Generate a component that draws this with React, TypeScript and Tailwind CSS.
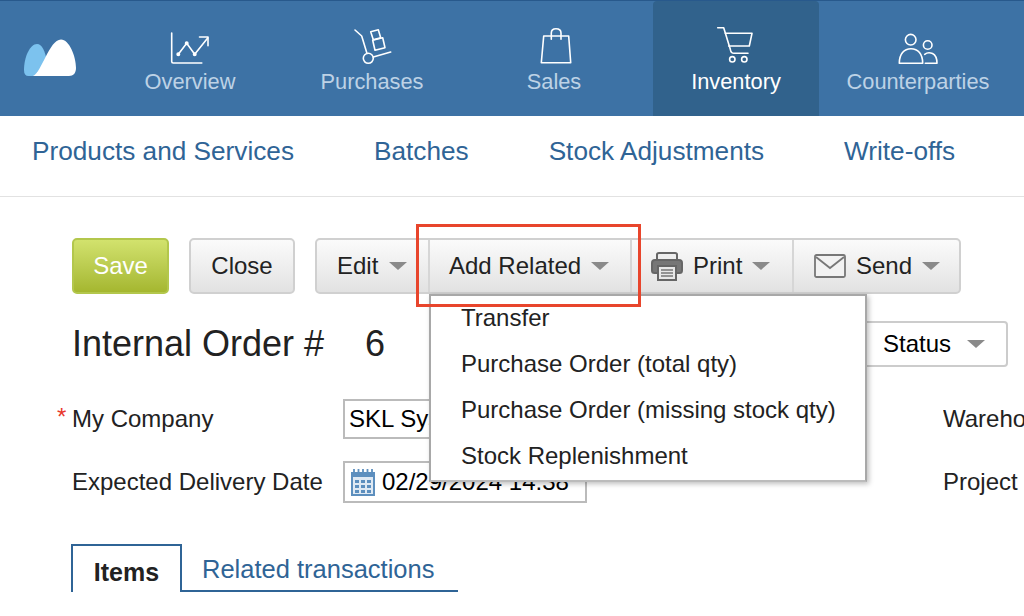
import * as React from "react";

const NavIcon = ({children}: {children: React.ReactNode}) => (
    <svg viewBox="0 0 44 40" className="w-[44px] h-[40px] overflow-visible" fill="none" stroke="white" strokeWidth="1.6" strokeLinecap="round" strokeLinejoin="round">
        {children}
    </svg>
);

const navItems: {label: string; active?: boolean; icon: React.ReactNode}[] = [
    {
        label: 'Overview',
        icon: (
            <>
                <path d="M3.7 4V32.5Q3.7 34 5.2 34H33.8" />
                <path d="M10.3 25.3L18.7 14.3L26.7 25.3L39.7 9" />
                <path d="M31.5 8H40V16.7" />
                <circle cx="10.3" cy="25.3" r="1.2" fill="white" />
                <circle cx="18.7" cy="14.3" r="1.2" fill="white" />
                <circle cx="26.7" cy="25.3" r="1.2" fill="white" />
            </>
        ),
    },
    {
        label: 'Purchases',
        icon: (
            <>
                <path d="M5 1L11.7 7L17 24.5" />
                <circle cx="18.3" cy="29.3" r="5" />
                <path d="M23.3 28L40.7 23" />
                <path d="M22.7 11.3L32.7 8.7L35 18.7L25 21.3Z" />
                <path d="M20.7 2.7L28.3 .7L30.7 8.7L23.3 10.7Z" />
            </>
        ),
    },
    {
        label: 'Sales',
        icon: (
            <>
                <path d="M11.7 7H36.7L38.7 33.7H9.3Z" />
                <path d="M19.3 10.3V4Q19.3 -.3 24 -.3Q29 -.3 29 4V10.3" />
            </>
        ),
    },
    {
        label: 'Inventory',
        active: true,
        icon: (
            <>
                <path d="M3.7 -1.3H9.7L16.3 20.3Q17 24.3 20 24.3H34" />
                <path d="M11.3 4.3H38L35.3 17H14.7" />
                <circle cx="18.3" cy="30.3" r="2.7" />
                <circle cx="30.3" cy="30.3" r="2.7" />
            </>
        ),
    },
    {
        label: 'Counterparties',
        icon: (
            <>
                <circle cx="14.7" cy="10.7" r="5.3" />
                <path d="M3.3 34.3C3.3 25 8 19.7 15 19.7C22 19.7 26.7 25 26.7 34.3Z" />
                <circle cx="31.7" cy="16" r="4.3" />
                <path d="M28.7 25.3C31 23.5 34 23.5 36.5 24.5C39.5 26 41 30 41 34.3H29.3" />
            </>
        ),
    },
];

const subNavItems = ['Products and Services', 'Batches', 'Stock Adjustments', 'Write-offs'];

const menuItems = ['Transfer', 'Purchase Order (total qty)', 'Purchase Order (missing stock qty)', 'Stock Replenishment'];

const Arrow = () => (
    <span className="inline-block w-0 h-0 border-x-[9px] border-t-[8px] border-x-transparent border-t-[#8a8a8a]" />
);

const btnGradient = 'bg-gradient-to-b from-[#fbfbfb] to-[#e2e2e2]';

function App() {
    return (
        <div className="w-[1024px] h-[616px] overflow-hidden bg-white text-[24px] text-[#222] font-['Liberation_Sans',Arial,sans-serif]">
            {/* top nav */}
            <div className="h-[116px] bg-[#3d72a5] border-t border-[#28598c] flex pl-[24px]">
                <svg viewBox="0 0 52 38" className="w-[52px] h-[38px] mt-[38px] mr-[31px] shrink-0">
                    <path d="M4.5 37C1.5 37 0 35 0 31C0 18 6 5 13 5C18 5 21 12 23 22L10 37Z" fill="#7cc2ee" />
                    <path d="M9 37C18 33 25 1 37 .5C45 .5 52 17 52 29C52 34 49.500 37 45 37Z" fill="white" />
                </svg>
                <div className="flex gap-[16px]">
                    {navItems.map((item) => (
                        <div key={item.label} className={`w-[166px] h-[115px] pt-[28px] flex flex-col items-center rounded-t ${item.active ? 'bg-[#31628c] text-white' : 'text-[#bdd2e6]'}`}>
                            <NavIcon>{item.icon}</NavIcon>
                            <span className="text-[21.8px] leading-[26px]">{item.label}</span>
                        </div>
                    ))}
                </div>
            </div>

            {/* sub nav */}
            <div className="h-[81px] border-b border-[#e2e2e2] flex items-center gap-[80px] pl-[32px] pb-[8px] text-[26.2px] text-[#2f6496]">
                {subNavItems.map((item) => (
                    <span key={item}>{item}</span>
                ))}
            </div>

            {/* toolbar */}
            <div className="mt-[41px] pl-[72px] flex h-[56px]">
                <button className="w-[97px] rounded-[5px] border-2 border-[#b3c74c] bg-gradient-to-b from-[#d2e26d] to-[#a5b72f] text-white">Save</button>
                <button className={`ml-[20px] w-[106px] rounded-[5px] border-2 border-[#d0d0d0] ${btnGradient}`}>Close</button>
                <div className={`ml-[20px] w-[646px] relative flex rounded-[5px] border-2 border-[#d0d0d0] ${btnGradient}`}>
                    <div className="w-[111px] flex items-center pl-[20px] gap-[11px]">
                        Edit <Arrow />
                    </div>
                    <div className="w-[202px] border-l-2 border-[#d6d6d6] flex items-center pl-[19px] gap-[10px]">
                        Add Related <Arrow />
                    </div>
                    <div className="w-[162px] border-l-2 border-[#d6d6d6] flex items-center pl-[19px] gap-[10px]">
                        <svg viewBox="0 0 32 29" className="w-[32px] h-[29px]">
                            <path d="M6 9V2.500Q6 1 8 1H24Q26 1 26 2.500V9" fill="#eee" stroke="#666" strokeWidth="2" />
                            <path d="M6 21H3.500Q1 21 1 18.500V11Q1 8 4 8H28Q31 8 31 11V18.500Q31 21 28.500 21H26" fill="#777" stroke="#666" strokeWidth="2" />
                            <rect x="7" y="14" width="18" height="14" fill="#e8e8e8" stroke="#666" strokeWidth="2" />
                            <path d="M10 18H22M10 21H22M10 24H22" stroke="#777" strokeWidth="1.500" />
                        </svg>
                        Print <Arrow />
                    </div>
                    <div className="flex-1 border-l-2 border-[#d6d6d6] flex items-center pl-[20px] gap-[10px]">
                        <svg viewBox="0 0 32 24" className="w-[32px] h-[24px]" fill="none" stroke="#777" strokeWidth="1.800">
                            <rect x="1" y="1" width="30" height="22" rx="1.500" fill="#f2f2f2" />
                            <path d="M2 3L16 14L30 3" />
                        </svg>
                        Send <Arrow />
                    </div>

                    {/* dropdown */}
                    <div className="absolute left-[112px] top-[54px] z-10 w-[438px] h-[188px] bg-white border-2 border-[#a8a8a8] border-b-[#bbb] shadow-[2px_2px_5px_rgba(0,0,0,0.25)] pl-[30px]">
                        {menuItems.map((item) => (
                            <div key={item} className="h-[46px] leading-[44px] whitespace-nowrap">{item}</div>
                        ))}
                    </div>
                    {/* annotation */}
                    <div className="absolute left-[99px] top-[-16px] z-20 w-[225px] h-[83px] border-[3px] border-[#e8452c]" />
                </div>
            </div>

            {/* title */}
            <div className="mt-[27px] pl-[72px] pr-[16px] h-[46px] flex items-center">
                <span className="text-[36px] w-[293px]">Internal Order #</span>
                <span className="text-[36px]">6</span>
                <div className="ml-auto w-[148px] h-[46px] border-2 border-[#ccc] rounded-[4px] flex items-center pl-[21px] gap-[16px] text-black">
                    Status <Arrow />
                </div>
            </div>

            {/* form */}
            <div className="mt-[32px] flex items-center h-[40px] pl-[72px]">
                <span className="relative w-[271px]">
                    <span className="absolute left-[-15px] top-[-2px] text-[#e8382c]">*</span>
                    My Company
                </span>
                <div className="w-[300px] h-[40px] border-2 border-[#bbb] pl-[4px] leading-[36px] text-black">SKL Systems</div>
                <span className="ml-auto w-[81px] overflow-hidden whitespace-nowrap">Warehouse</span>
            </div>
            <div className="mt-[22px] flex items-center h-[42px] pl-[72px]">
                <span className="w-[271px]">Expected Delivery Date</span>
                <div className="w-[244px] h-[42px] border-2 border-[#bbb] pl-[6px] flex items-center gap-[7px] text-black">
                    <svg viewBox="0 0 24 27" className="w-[24px] h-[27px] shrink-0">
                        <path d="M0 3H24V27H0Z" fill="#5d8fbe" />
                        <path d="M3 0V5M7.500 0V5M12 0V5M16.500 0V5M21 0V5" stroke="#5d8fbe" strokeWidth="1.800" />
                        <rect x="2" y="8" width="20" height="17" fill="#dfe9f3" />
                        <path d="M4 11H8V14H4ZM10 11H14V14H10ZM16 11H20V14H16ZM4 16H8V19H4ZM10 16H14V19H10ZM16 16H20V19H16ZM4 21H8V24H4ZM10 21H14V24H10ZM16 21H20V24H16Z" fill="#5d8fbe" />
                    </svg>
                    <span className="whitespace-nowrap">02/29/2024 14:38</span>
                </div>
                <span className="ml-auto w-[81px]">Project</span>
            </div>

            {/* tabs */}
            <div className="mt-[41px] ml-[71px] w-[387px] h-[48px] flex items-stretch">
                <div className="w-[111px] border-2 border-b-0 border-[#2f6496] flex items-center justify-center pt-[8px] font-bold text-[25px]">Items</div>
                <div className="flex-1 border-b-[2px] border-[#2f6496] pl-[20px] pt-[6px] text-[25.5px] text-[#2f6496]">Related transactions</div>
            </div>
        </div>
    );
}

export default App;
